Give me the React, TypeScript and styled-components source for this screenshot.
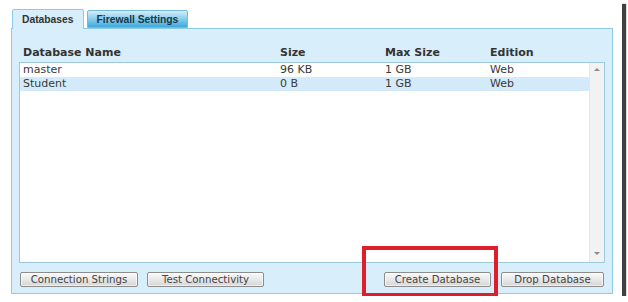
import React from "react";
import styled, { createGlobalStyle } from "styled-components";

const Global = createGlobalStyle`
  html, body { margin: 0; padding: 0; background: #ffffff; }
  body { font-family: "DejaVu Sans", Verdana, sans-serif; }
`;

const Frame = styled.div`
  position: relative;
  width: 622px;
  height: 296px;
  background: #ffffff;
  box-shadow: 4px 4px 1px rgba(30, 30, 30, 0.85);
  box-sizing: border-box;
  padding: 9px 9px 0 11px;
  display: flex;
  flex-direction: column;
`;

const TabStrip = styled.div`
  display: flex;
  align-items: flex-end;
  gap: 3px;
  padding-left: 1px;
  height: 19px;
  position: relative;
  z-index: 1;
`;

const Tab = styled.div<{ $active?: boolean }>`
  box-sizing: border-box;
  height: ${(p) => (p.$active ? "20px" : "18px")};
  margin-bottom: ${(p) => (p.$active ? "-1px" : "0")};
  padding: 0 ${(p) => (p.$active ? "9px" : "9px")};
  display: flex;
  align-items: center;
  font-family: "Liberation Sans", Arial, sans-serif;
  font-weight: bold;
  font-size: 10.3px;
  color: ${(p) => (p.$active ? "#333333" : "#17384a")};
  border: 1px solid ${(p) => (p.$active ? "#8fcbe4" : "#72b9da")};
  border-bottom: ${(p) => (p.$active ? "none" : "1px solid #72b9da")};
  border-radius: 2px 2px 0 0;
  background: ${(p) =>
    p.$active
      ? "#d8eefa"
      : "linear-gradient(to bottom, #d3edf9 0%, #8fd0ee 45%, #3fa9dc 100%)"};
`;

const Panel = styled.div`
  box-sizing: border-box;
  width: 602px;
  height: 266px;
  background: #d8eefa;
  border: 1px solid #8fcbe4;
  padding: 17px 7px 0 7px;
  display: flex;
  flex-direction: column;
`;

const Columns = styled.div`
  display: grid;
  grid-template-columns: 257px 105px 105px 1fr;
  padding-left: 4px;
`;

const HeaderRow = styled(Columns)`
  height: 14px;
  line-height: 14px;
  font-weight: bold;
  font-size: 11px;
  color: #333333;
  margin-bottom: 2px;
`;

const ListBox = styled.div`
  box-sizing: border-box;
  height: 201px;
  background: #ffffff;
  border: 1px solid #9cc9de;
  display: flex;
`;

const Rows = styled.div`
  flex: 1;
  display: flex;
  flex-direction: column;
`;

const Row = styled(Columns)<{ $selected?: boolean }>`
  height: 14px;
  line-height: 14px;
  font-size: 11px;
  color: #3a3a3a;
  padding-left: 3px;
  background: ${(p) => (p.$selected ? "#d2eaf9" : "transparent")};
`;

const ScrollBar = styled.div`
  width: 14px;
  background: #f2f2f2;
  border-left: 1px solid #e6e6e6;
  display: flex;
  flex-direction: column;
  justify-content: space-between;
  align-items: center;
  padding: 5px 0 7px;
`;

const Arrow = styled.div<{ $down?: boolean }>`
  width: 0;
  height: 0;
  border-left: 3px solid transparent;
  border-right: 3px solid transparent;
  ${(p) =>
    p.$down
      ? "border-top: 3px solid #8a8a8a;"
      : "border-bottom: 3px solid #8a8a8a;"}
`;

const ButtonBar = styled.div`
  display: flex;
  justify-content: space-between;
  margin-top: 9px;
  padding: 0 1px 0 1px;
`;

const Group = styled.div<{ $gap: number }>`
  display: flex;
  gap: ${(p) => p.$gap}px;
`;

const Button = styled.button<{ $w: number }>`
  box-sizing: border-box;
  width: ${(p) => p.$w}px;
  height: 15px;
  padding: 0;
  margin: 0;
  font-family: "DejaVu Sans", Verdana, sans-serif;
  font-size: 10.2px;
  line-height: 13px;
  color: #444444;
  border: 1px solid #8c8c8c;
  border-radius: 2px;
  background: linear-gradient(to bottom, #fafafa 0%, #e8e8e8 50%, #d6d6d6 100%);
  box-shadow: inset 0 0 0 1px rgba(255, 255, 255, 0.6);
`;

const Highlight = styled.div`
  position: absolute;
  left: 362px;
  top: 246px;
  width: 136px;
  height: 51px;
  box-sizing: border-box;
  border: 4px solid #dc1f2a;
  pointer-events: none;
`;

const rows = [
  { name: "master", size: "96 KB", max: "1 GB", edition: "Web" },
  { name: "Student", size: "0 B", max: "1 GB", edition: "Web" },
];

export default function App() {
  return (
    <>
      <Global />
      <Frame>
        <TabStrip>
          <Tab $active>Databases</Tab>
          <Tab>Firewall Settings</Tab>
        </TabStrip>
        <Panel>
          <HeaderRow>
            <span>Database Name</span>
            <span>Size</span>
            <span>Max Size</span>
            <span>Edition</span>
          </HeaderRow>
          <ListBox>
            <Rows>
              {rows.map((r, i) => (
                <Row key={r.name} $selected={i === 1}>
                  <span>{r.name}</span>
                  <span>{r.size}</span>
                  <span>{r.max}</span>
                  <span>{r.edition}</span>
                </Row>
              ))}
            </Rows>
            <ScrollBar>
              <Arrow />
              <Arrow $down />
            </ScrollBar>
          </ListBox>
          <ButtonBar>
            <Group $gap={9}>
              <Button $w={118}>Connection Strings</Button>
              <Button $w={117}>Test Connectivity</Button>
            </Group>
            <Group $gap={10}>
              <Button $w={107}>Create Database</Button>
              <Button $w={103}>Drop Database</Button>
            </Group>
          </ButtonBar>
        </Panel>
        <Highlight />
      </Frame>
    </>
  );
}
